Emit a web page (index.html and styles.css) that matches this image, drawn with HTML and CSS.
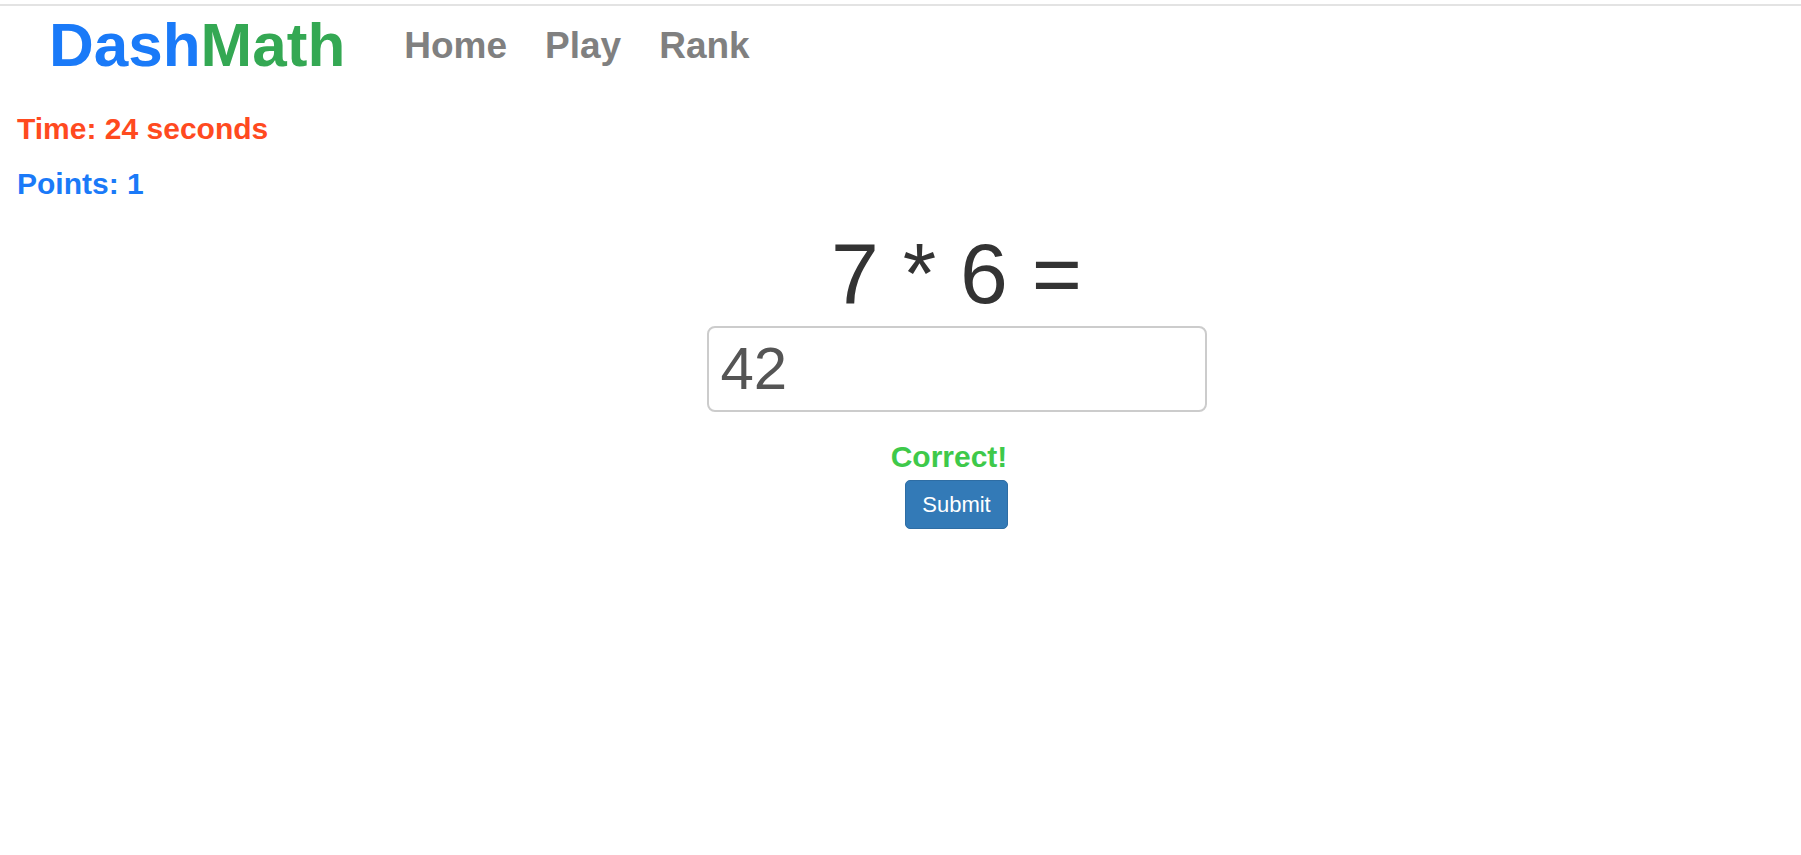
FILE: index.html
```html
<!DOCTYPE html>
<html lang="en">
<head>
<meta charset="utf-8">
<title>DashMath</title>
<link rel="stylesheet" href="styles.css">
</head>
<body>
<header class="topbar">
  <a class="brand" href="#"><span class="brand-dash">Dash</span><span class="brand-math">Math</span></a>
  <nav class="nav">
    <a class="nav-link" href="#">Home</a>
    <a class="nav-link" href="#">Play</a>
    <a class="nav-link" href="#">Rank</a>
  </nav>
</header>
<main class="game">
  <section class="stats">
    <div class="stat stat-time">Time: 24 seconds</div>
    <div class="stat stat-points">Points: 1</div>
  </section>
  <section class="stage">
    <h1 class="question">7 * 6 =</h1>
    <input class="answer" type="text" value="42">
    <div class="feedback">Correct!</div>
    <button class="submit" type="button">Submit</button>
  </section>
</main>
</body>
</html>
```

FILE: styles.css
```css
html, body {
  margin: 0;
  padding: 0;
  background: #ffffff;
}

body {
  font-family: "Liberation Sans", Arial, sans-serif;
  color: #333333;
}

.topbar {
  margin-top: 4px;
  border-top: 2px solid #e3e3e3;
  padding: 8px 0 0 49px;
  display: flex;
  align-items: center;
}

.brand {
  font-size: 62px;
  line-height: 62px;
  font-weight: 700;
  text-decoration: none;
  white-space: nowrap;
}

.brand-dash {
  color: #1a7af8;
}

.brand-math {
  color: #34a853;
}

.nav {
  margin-left: 59px;
  display: flex;
  gap: 38px;
}

.nav-link {
  font-size: 37px;
  line-height: 37px;
  font-weight: 700;
  color: #808080;
  text-decoration: none;
}

.game {
  margin-top: 36px;
}

.stats {
  padding-left: 17px;
  display: flex;
  flex-direction: column;
  gap: 22px;
}

.stat {
  font-size: 30px;
  line-height: 33px;
  font-weight: 700;
}

.stat-time {
  color: #ff4a1f;
}

.stat-points {
  color: #1a7af8;
}

.stage {
  margin-left: 112px;
  margin-top: 26px;
  display: flex;
  flex-direction: column;
  align-items: center;
}

.question {
  margin: 0;
  font-size: 86px;
  line-height: 94.6px;
  font-weight: 400;
  color: #333333;
}

.answer {
  margin-top: 5px;
  box-sizing: border-box;
  width: 500px;
  height: 86px;
  padding: 0 12px;
  border: 2px solid #cccccc;
  border-radius: 8px;
  font-family: "Liberation Sans", Arial, sans-serif;
  font-size: 60px;
  color: #555555;
  background: #ffffff;
  outline: none;
}

.feedback {
  margin-top: 28px;
  padding-right: 15px;
  font-size: 30px;
  line-height: 33px;
  font-weight: 700;
  color: #3ec94a;
}

.submit {
  margin-top: 7px;
  padding: 8px 16px;
  border: 1px solid #2e6da4;
  border-radius: 5px;
  background: #337ab7;
  color: #ffffff;
  font-family: "Liberation Sans", Arial, sans-serif;
  font-size: 22px;
  line-height: 31px;
  cursor: pointer;
}
```
